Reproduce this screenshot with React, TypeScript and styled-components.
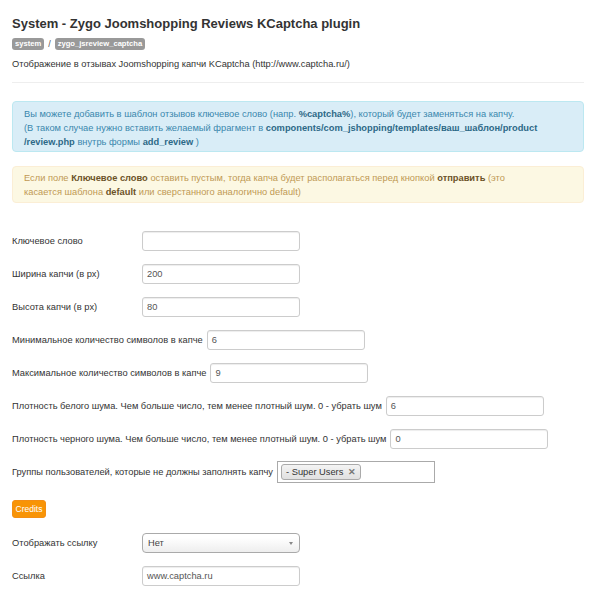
import React from "react";
import styled, { createGlobalStyle } from "styled-components";

const Global = createGlobalStyle`
  html, body { margin: 0; padding: 0; background: #fff; }
  body { font-family: "Liberation Sans", Arial, sans-serif; color: #333; font-size: 9.3px; }
  * { box-sizing: border-box; }
`;

const Page = styled.div`
  padding: 16px 10px 20px 12px;
  width: 594px;
`;

const Title = styled.h1`
  margin: 0;
  font-size: 13px;
  line-height: 16px;
  font-weight: bold;
  color: #333;
`;

const BadgeRow = styled.div`
  display: flex;
  align-items: center;
  gap: 4px;
  margin-top: 6px;
  height: 12px;
  color: #555;
  font-size: 9px;
`;

const Badge = styled.span`
  display: inline-block;
  background: #999;
  color: #fff;
  font-weight: bold;
  font-size: 7.6px;
  line-height: 12px;
  height: 12px;
  padding: 0 3px;
  border-radius: 3px;
`;

const Description = styled.p`
  margin: 7px 0 0;
  line-height: 14px;
  font-size: 9.3px;
`;

const Rule = styled.hr`
  margin: 11px 0 0;
  border: 0;
  border-top: 1px solid #eee;
`;

const Alert = styled.div<{ $kind: "info" | "warning" }>`
  margin-top: ${(p) => (p.$kind === "info" ? "18px" : "14px")};
  padding: ${(p) => (p.$kind === "info" ? "5px 11px 2px" : "4px 11px 3px")};
  border-radius: 4px;
  line-height: 14px;
  font-size: 9.3px;
  white-space: nowrap;
  background: ${(p) => (p.$kind === "info" ? "#d9edf7" : "#fcf8e3")};
  border: 1px solid ${(p) => (p.$kind === "info" ? "#bce8f1" : "#fbeed5")};
  color: ${(p) => (p.$kind === "info" ? "#3a87ad" : "#c09853")};
  b { font-weight: bold; color: ${(p) => (p.$kind === "info" ? "#2d6987" : "#6c5328")}; }
`;

const Form = styled.div`
  margin-top: 28px;
  display: flex;
  flex-direction: column;
  gap: 13px;
`;

const Row = styled.div<{ $mt?: number }>`
  display: flex;
  align-items: center;
  margin-top: ${(p) => p.$mt ?? 0}px;
`;

const Label = styled.label`
  min-width: 126px;
  margin-right: 4px;
  font-size: 9.3px;
  color: #333;
  white-space: nowrap;
`;

const Input = styled.div`
  width: 158px;
  height: 20px;
  border: 1px solid #ccc;
  border-radius: 3px;
  padding: 0 4px;
  display: flex;
  align-items: center;
  font-size: 9.3px;
  color: #555;
  background: #fff;
  box-shadow: inset 0 1px 1px rgba(0, 0, 0, 0.075);
`;

const MultiSelect = styled.div`
  width: 158px;
  height: 22px;
  border: 1px solid #aaa;
  padding: 0 3px;
  display: flex;
  align-items: center;
  background: #fff;
`;

const Tag = styled.span`
  display: inline-flex;
  align-items: center;
  gap: 5px;
  height: 16px;
  padding: 0 4px;
  border: 1px solid #aaa;
  border-radius: 3px;
  background: linear-gradient(#f4f4f4, #e0e0e0);
  color: #333;
  font-size: 9.3px;
`;

const TagClose = styled.span`
  color: #777;
  font-size: 9px;
  font-weight: bold;
`;

const Button = styled.button`
  font-family: inherit;
  width: 34px;
  height: 18px;
  padding: 0;
  border: 1px solid #f48e13;
  border-radius: 3px;
  background: #f89406;
  color: #fff;
  font-size: 8.5px;
  line-height: 16px;
`;

const Select = styled.div`
  width: 158px;
  height: 20px;
  border: 1px solid #aaa;
  border-radius: 4px;
  padding: 0 6px 0 5px;
  display: flex;
  align-items: center;
  justify-content: space-between;
  font-size: 9.3px;
  color: #444;
  background: linear-gradient(#fff 20%, #eee 100%);
`;

const Arrow = styled.span`
  width: 0;
  height: 0;
  border-left: 2.5px solid transparent;
  border-right: 2.5px solid transparent;
  border-top: 3px solid #888;
`;

const fields: [string, string][] = [
  ["Ключевое слово", ""],
  ["Ширина капчи (в px)", "200"],
  ["Высота капчи (в px)", "80"],
  ["Минимальное количество символов в капче", "6"],
  ["Максимальное количество символов в капче", "9"],
  ["Плотность белого шума. Чем больше число, тем менее плотный шум. 0 - убрать шум", "6"],
  ["Плотность черного шума. Чем больше число, тем менее плотный шум. 0 - убрать шум", "0"],
];

export default function App() {
  return (
    <Page>
      <Global />
      <Title>System - Zygo Joomshopping Reviews KCaptcha plugin</Title>
      <BadgeRow>
        <Badge>system</Badge>
        <span>/</span>
        <Badge>zygo_jsreview_captcha</Badge>
      </BadgeRow>
      <Description>Отображение в отзывах Joomshopping капчи KCaptcha (http://www.captcha.ru/)</Description>
      <Rule />
      <Alert $kind="info">
        Вы можете добавить в шаблон отзывов ключевое слово (напр. <b>%captcha%</b>), который будет заменяться на капчу.
        <br />
        (В таком случае нужно вставить желаемый фрагмент в <b>components/com_jshopping/templates/ваш_шаблон/product</b>
        <br />
        <b>/review.php</b> внутрь формы <b>add_review</b> )
      </Alert>
      <Alert $kind="warning">
        Если поле <b>Ключевое слово</b> оставить пустым, тогда капча будет располагаться перед кнопкой <b>отправить</b> (это
        <br />
        касается шаблона <b>default</b> или сверстанного аналогично default)
      </Alert>
      <Form>
        {fields.map(([label, value]) => (
          <Row key={label}>
            <Label>{label}</Label>
            <Input>{value}</Input>
          </Row>
        ))}
        <Row $mt={-1}>
          <Label>Группы пользователей, которые не должны заполнять капчу</Label>
          <MultiSelect>
            <Tag>
              - Super Users <TagClose>✕</TagClose>
            </Tag>
          </MultiSelect>
        </Row>
        <Row $mt={4}>
          <Button>Credits</Button>
        </Row>
        <Row $mt={2}>
          <Label>Отображать ссылку</Label>
          <Select>
            <span>Нет</span>
            <Arrow />
          </Select>
        </Row>
        <Row>
          <Label>Ссылка</Label>
          <Input>www.captcha.ru</Input>
        </Row>
      </Form>
    </Page>
  );
}
